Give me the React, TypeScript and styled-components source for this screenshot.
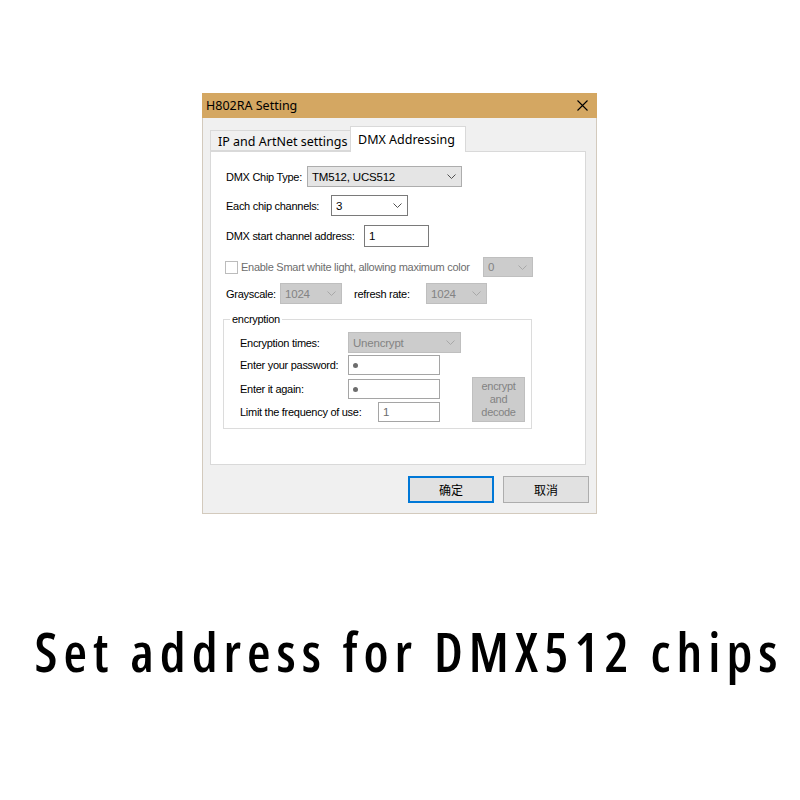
import React from "react";
import styled, { createGlobalStyle } from "styled-components";

const UI = `"Liberation Sans", Arial, sans-serif`;
const HEAD = `"Noto Sans", "Noto Sans CJK SC", sans-serif`;
const CJK = `"Noto Sans CJK SC", "Noto Sans", sans-serif`;

const GlobalStyle = createGlobalStyle`
  html, body { margin: 0; padding: 0; background: #fff; }
  * { box-sizing: border-box; }
`;

const Page = styled.div`
  width: 800px;
  height: 800px;
  padding-top: 93px;
  display: flex;
  flex-direction: column;
  background: #fff;
`;

const Dialog = styled.div`
  margin-left: 202px;
  width: 395px;
  display: flex;
  flex-direction: column;
`;

const TitleBar = styled.div`
  height: 25px;
  background: #d4a762;
  display: flex;
  align-items: center;
  justify-content: space-between;
  padding: 0 9px 0 4px;
  font-family: ${HEAD};
  font-size: 12.5px;
  color: #000;
`;

const Body = styled.div`
  background: #f0f0f0;
  border: 1px solid #d3cabd;
  border-top: none;
  padding: 8px 7px 10px 7px;
`;

const TabStrip = styled.div`
  height: 25px;
  display: flex;
  align-items: flex-end;
`;

const Tab = styled.div<{ $active?: boolean; $w: number }>`
  width: ${({ $w }) => $w}px;
  height: ${({ $active }) => ($active ? 26 : 21)}px;
  margin-bottom: ${({ $active }) => ($active ? -1 : 0)}px;
  margin-left: ${({ $active }) => ($active ? -1 : 0)}px;
  position: relative;
  z-index: ${({ $active }) => ($active ? 1 : 0)};
  background: ${({ $active }) => ($active ? "#fff" : "#f0f0f0")};
  border: 1px solid #d9d9d9;
  border-bottom: ${({ $active }) => ($active ? "none" : "1px solid #d9d9d9")};
  padding-left: 7px;
  display: flex;
  align-items: center;
  padding-top: ${({ $active }) => ($active ? 0 : 2)}px;
  font-family: ${HEAD};
  font-size: 12.5px;
  color: #000;
  white-space: nowrap;
`;

const Panel = styled.div`
  width: 376px;
  height: 314px;
  background: #fff;
  border: 1px solid #d9d9d9;
  padding: 14px 0 0 12px;
`;

const Row = styled.div<{ $top: number; $h: number; $indent?: number }>`
  display: flex;
  align-items: center;
  height: ${({ $h }) => $h}px;
  margin-top: ${({ $top }) => $top}px;
  padding-left: ${({ $indent }) => $indent ?? 0}px;
`;

const Label = styled.span<{ $w?: number; $muted?: boolean; $gap?: number }>`
  flex-shrink: 0;
  width: ${({ $w }) => ($w ? `${$w}px` : "auto")};
  margin-left: ${({ $gap }) => $gap ?? 0}px;
  font-family: ${UI};
  font-size: 11px;
  letter-spacing: -0.28px;
  color: ${({ $muted }) => ($muted ? "#6d6d6d" : "#000")};
  white-space: nowrap;
`;

const Combo = styled.div<{ $w: number; $tone: "gray" | "white" | "off" }>`
  width: ${({ $w }) => $w}px;
  height: 100%;
  display: flex;
  align-items: center;
  justify-content: space-between;
  padding: 0 5px 0 4px;
  background: ${({ $tone }) =>
    $tone === "gray" ? "#e5e5e5" : $tone === "white" ? "#fff" : "#cccccc"};
  border: 1px solid
    ${({ $tone }) =>
      $tone === "gray" ? "#adadad" : $tone === "white" ? "#7a7a7a" : "#bfbfbf"};
  font-family: ${UI};
  font-size: 11.5px;
  letter-spacing: -0.2px;
  color: ${({ $tone }) => ($tone === "off" ? "#838383" : "#000")};
`;

const TextBox = styled.div<{ $w: number; $dim?: boolean }>`
  width: ${({ $w }) => $w}px;
  height: 100%;
  display: flex;
  align-items: center;
  padding-left: 4px;
  background: #fff;
  border: 1px solid ${({ $dim }) => ($dim ? "#a5a5a5" : "#7a7a7a")};
  font-family: ${UI};
  font-size: 11.5px;
  color: ${({ $dim }) => ($dim ? "#6d6d6d" : "#000")};
`;

const Dot = styled.span`
  width: 5px;
  height: 5px;
  border-radius: 50%;
  background: #6d6d6d;
`;

const Check = styled.span`
  width: 13px;
  height: 13px;
  flex-shrink: 0;
  margin-right: 3px;
  border: 1px solid #bcbcbc;
  background: #fff;
`;

const Group = styled.fieldset`
  width: 309px;
  margin: 9px 0 0 0;
  padding: 0 6px 6px 6px;
  border: 1px solid #dcdcdc;
  min-width: 0;
`;

const Legend = styled.legend`
  padding: 0 2px;
  margin-left: 0;
  font-family: ${UI};
  font-size: 11px;
  line-height: 13px;
  letter-spacing: -0.28px;
  color: #000;
`;

const GroupInner = styled.div`
  display: flex;
  padding-left: 10px;
`;

const GroupRows = styled.div`
  width: 221px;
  display: flex;
  flex-direction: column;
`;

const OffButton = styled.div`
  width: 54px;
  height: 45px;
  margin-left: 11px;
  align-self: flex-end;
  background: #cccccc;
  border: 1px solid #bfbfbf;
  display: flex;
  align-items: center;
  justify-content: center;
  text-align: center;
  font-family: ${UI};
  font-size: 11px;
  line-height: 13px;
  letter-spacing: -0.3px;
  color: #838383;
`;

const ButtonRow = styled.div`
  margin-top: 11px;
  display: flex;
  justify-content: flex-end;
  gap: 9px;
`;

const DialogButton = styled.div<{ $primary?: boolean }>`
  width: 86px;
  height: 27px;
  display: flex;
  align-items: center;
  justify-content: center;
  background: #e1e1e1;
  border: ${({ $primary }) => ($primary ? "2px solid #0078d7" : "1px solid #adadad")};
  font-family: ${CJK};
  font-size: 12px;
  color: #000;
`;

const Caption = styled.div`
  margin-top: 102px;
  text-align: center;
  padding-left: 18px;
  font-family: "Open Sans", "Noto Sans", sans-serif;
  font-stretch: 80%;
  font-weight: 600;
  font-size: 54px;
  line-height: 70px;
  letter-spacing: 6px;
  color: #000;
  white-space: nowrap;
`;

const Chevron = ({ off }: { off?: boolean }) => (
  <svg width="9" height="5" viewBox="0 0 9 5">
    <polyline
      points="0.5,0.5 4.5,4.5 8.5,0.5"
      fill="none"
      stroke={off ? "#a8a8a8" : "#505050"}
      strokeWidth="1"
    />
  </svg>
);

const Close = () => (
  <svg width="11" height="11" viewBox="0 0 11 11">
    <path d="M0.5 0.5 L10.5 10.5 M10.5 0.5 L0.5 10.5" stroke="#000" strokeWidth="1.1" />
  </svg>
);

export default function App() {
  return (
    <>
      <GlobalStyle />
      <Page>
        <Dialog>
          <TitleBar>
            <span>H802RA Setting</span>
            <Close />
          </TitleBar>
          <Body>
            <TabStrip>
              <Tab $w={141}>IP and ArtNet settings</Tab>
              <Tab $w={116} $active>DMX Addressing</Tab>
            </TabStrip>
            <Panel>
              <Row $top={0} $h={21} $indent={3}>
                <Label $w={81}>DMX Chip Type:</Label>
                <Combo $w={155} $tone="gray">
                  <span>TM512, UCS512</span>
                  <Chevron />
                </Combo>
              </Row>
              <Row $top={8} $h={21} $indent={3}>
                <Label $w={105}>Each chip channels:</Label>
                <Combo $w={77} $tone="white">
                  <span>3</span>
                  <Chevron />
                </Combo>
              </Row>
              <Row $top={9} $h={22} $indent={3}>
                <Label $w={138}>DMX start channel address:</Label>
                <TextBox $w={65}>1</TextBox>
              </Row>
              <Row $top={10} $h={20} $indent={2}>
                <Check />
                <Label $w={242} $muted>Enable Smart white light, allowing maximum color</Label>
                <Combo $w={50} $tone="off">
                  <span>0</span>
                  <Chevron off />
                </Combo>
              </Row>
              <Row $top={6} $h={21} $indent={3}>
                <Label $w={54}>Grayscale:</Label>
                <Combo $w={62} $tone="off">
                  <span>1024</span>
                  <Chevron off />
                </Combo>
                <Label $w={72} $gap={12}>refresh rate:</Label>
                <Combo $w={61} $tone="off">
                  <span>1024</span>
                  <Chevron off />
                </Combo>
              </Row>
              <Group>
                <Legend>encryption</Legend>
                <GroupInner>
                  <GroupRows>
                    <Row $top={6} $h={21}>
                      <Label $w={108}>Encryption times:</Label>
                      <Combo $w={113} $tone="off">
                        <span>Unencrypt</span>
                        <Chevron off />
                      </Combo>
                    </Row>
                    <Row $top={2} $h={20}>
                      <Label $w={108}>Enter your password:</Label>
                      <TextBox $w={92} $dim>
                        <Dot />
                      </TextBox>
                    </Row>
                    <Row $top={4} $h={20}>
                      <Label $w={108}>Enter it again:</Label>
                      <TextBox $w={92} $dim>
                        <Dot />
                      </TextBox>
                    </Row>
                    <Row $top={3} $h={20}>
                      <Label $w={138}>Limit the frequency of use:</Label>
                      <TextBox $w={62} $dim>1</TextBox>
                    </Row>
                  </GroupRows>
                  <OffButton>
                    encrypt
                    <br />
                    and
                    <br />
                    decode
                  </OffButton>
                </GroupInner>
              </Group>
            </Panel>
            <ButtonRow>
              <DialogButton $primary>确定</DialogButton>
              <DialogButton>取消</DialogButton>
            </ButtonRow>
          </Body>
        </Dialog>
        <Caption>Set address for DMX512 chips</Caption>
      </Page>
    </>
  );
}
